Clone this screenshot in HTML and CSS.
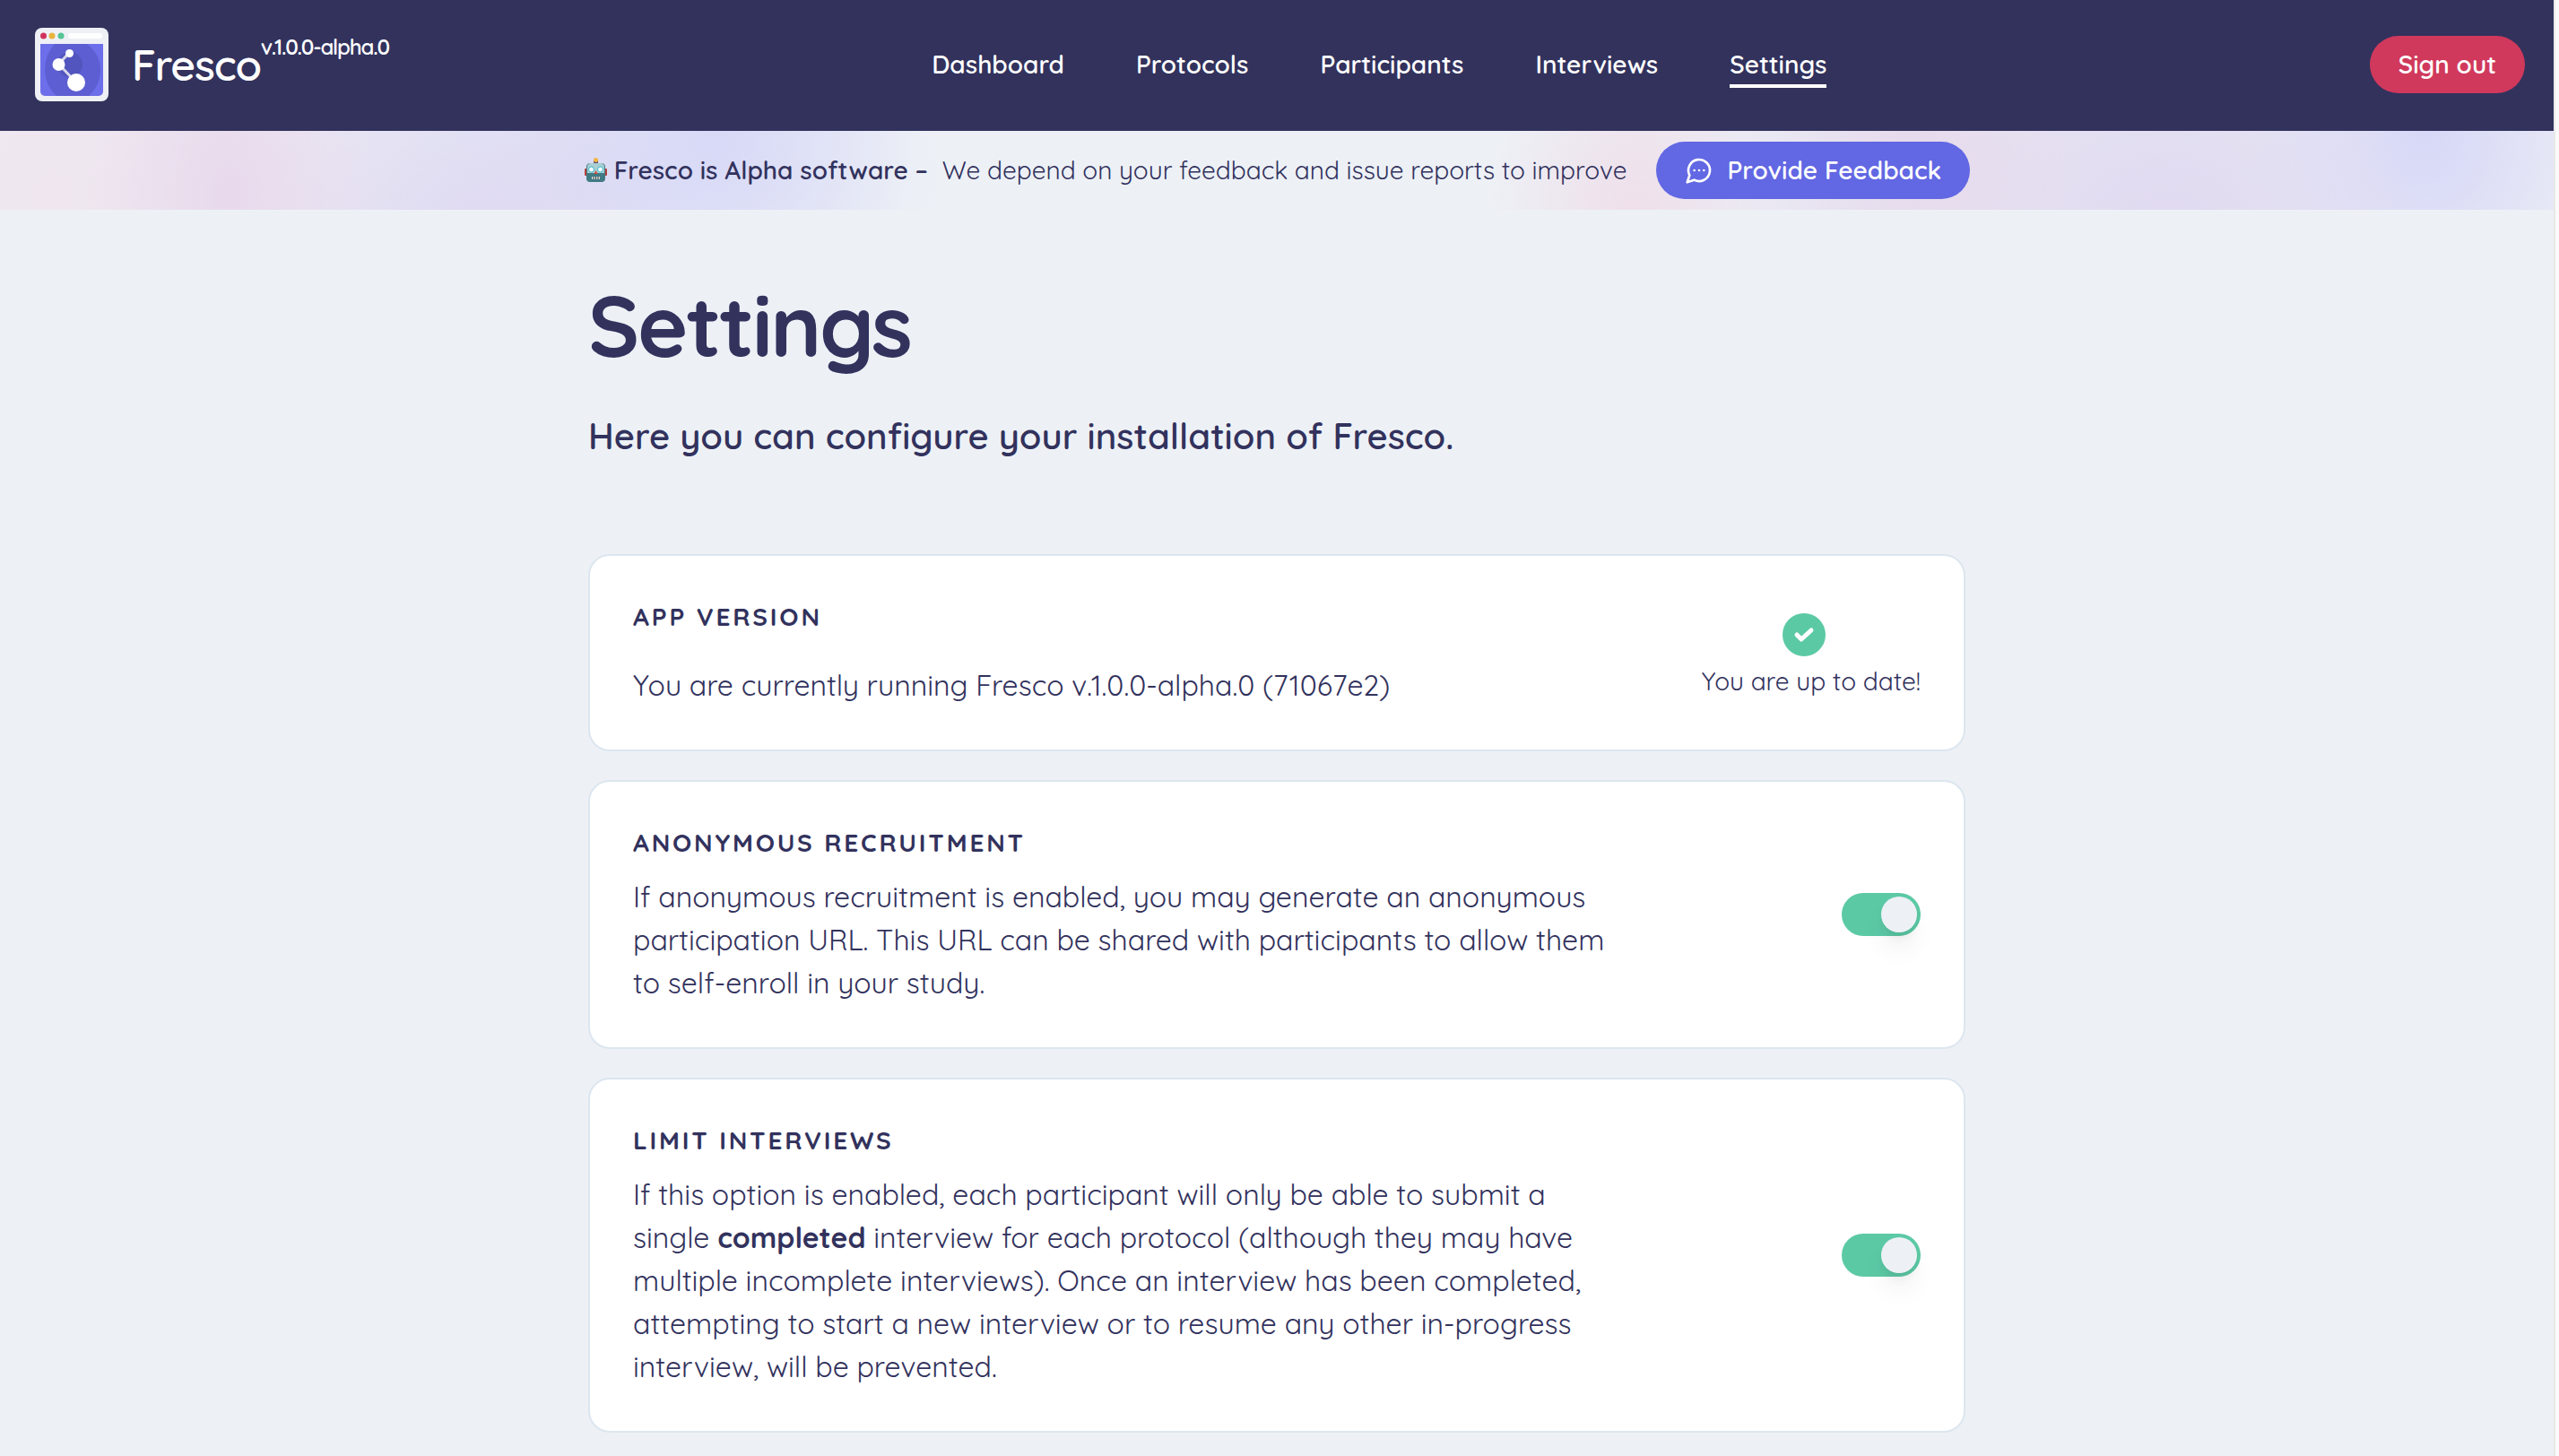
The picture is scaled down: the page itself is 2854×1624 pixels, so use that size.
FILE: index.html
```html
<!DOCTYPE html>
<html lang="en">
<head>
<meta charset="utf-8">
<meta name="viewport" content="width=device-width, initial-scale=1">
<title>Fresco – Settings</title>
<link rel="stylesheet" href="styles.css">
</head>
<body>
<header class="navbar">
  <a class="brand" href="#">
    <svg class="brand-logo" viewBox="0 0 82 82" aria-hidden="true">
      <rect width="82" height="82" rx="8" fill="#eef0f6"/>
      <circle cx="9.500" cy="9" r="3.500" fill="#d1325c"/>
      <circle cx="19" cy="9" r="3.500" fill="#e9b53c"/>
      <circle cx="29" cy="9" r="3.500" fill="#53c595"/>
      <rect x="37" y="6" width="38" height="6" rx="3" fill="#fff"/>
      <path d="M6 18h70v53a5 5 0 0 1-5 5H11a5 5 0 0 1-5-5z" fill="#6c6fe9"/>
      <path d="M22 18h36q15 12 15 29 0 17-13 29H24Q11 64 11 47q0-17 11-29z" fill="#5d5ed2"/>
      <circle cx="39" cy="41" r="14" fill="#5355be"/>
      <path d="M38 28 26.500 40.500 46 61" fill="none" stroke="#d6d7ea" stroke-width="3"/>
      <circle cx="38.500" cy="28.500" r="4.500" fill="#fff"/>
      <circle cx="26.500" cy="41" r="7" fill="#fff"/>
      <circle cx="46" cy="61" r="10" fill="#fff"/>
    </svg>
    <span class="brand-text"><span>Fresco</span><span class="brand-version">v.1.0.0-alpha.0</span></span>
  </a>
  <nav class="nav-links" aria-label="Main">
    <a href="#">Dashboard</a>
    <a href="#">Protocols</a>
    <a href="#">Participants</a>
    <a href="#">Interviews</a>
    <a class="active" href="#" aria-current="page">Settings</a>
  </nav>
  <button class="button button-danger" type="button">Sign out</button>
</header>

<aside class="banner">
  <p class="banner-text">
    <svg class="robot" viewBox="0 0 26 28" aria-hidden="true">
      <rect x="11" y="3" width="5" height="4" fill="#5a4c73"/>
      <circle cx="13.500" cy="2.500" r="2.500" fill="#f2b63d"/>
      <rect x="1" y="12" width="4" height="8" rx="1" fill="#b3423c"/>
      <rect x="22" y="12" width="4" height="8" rx="1" fill="#b3423c"/>
      <path d="M6 6h15q3 1 3 4v13q0 4-4 4H7q-4 0-4-4V10q0-3 3-4z" fill="#407a83"/>
      <path d="M7 6h13q3 1 3 4v7H4v-7q0-3 3-4z" fill="#a9cfd1"/>
      <circle cx="8.500" cy="13" r="3" fill="#f4ffff" stroke="#3fb5d1"/>
      <circle cx="18.500" cy="13" r="3" fill="#f4ffff" stroke="#3fb5d1"/>
      <path d="m13.500 14 2 4h-4z" fill="#cf4740"/>
      <path d="M9 21h9v3H9z" fill="#d5dcd6"/>
      <path d="M11 21v3M13.500 21v3M16 21v3" stroke="#35444e"/>
    </svg>
    <strong>Fresco is Alpha software –</strong>
    <span>We depend on your feedback and issue reports to improve</span>
  </p>
  <button class="button button-primary" type="button">
    <svg class="button-icon" viewBox="0 0 24 24" fill="none" stroke="currentColor" stroke-width="2" stroke-linecap="round" stroke-linejoin="round" aria-hidden="true">
      <path d="M7.900 20A9 9 0 1 0 4 16.100L2 22Z"/>
      <path d="M8 12h.01M12 12h.01M16 12h.01"/>
    </svg>
    Provide Feedback
  </button>
</aside>

<main class="content">
  <h1 class="page-title">Settings</h1>
  <p class="page-lead">Here you can configure your installation of Fresco.</p>

  <div class="cards">
    <section class="card">
      <div class="card-body card-body-spaced">
        <h2>App version</h2>
        <p>You are currently running Fresco v.1.0.0-alpha.0 (71067e2)</p>
      </div>
      <div class="status">
        <svg class="status-icon" viewBox="0 0 48 48" aria-hidden="true">
          <circle cx="24" cy="24" r="24" fill="#5cc9a5"/>
          <path d="m16 24 5 5 11-10" fill="none" stroke="#fff" stroke-width="5" stroke-linecap="round" stroke-linejoin="round"/>
        </svg>
        <span>You are up to date!</span>
      </div>
    </section>

    <section class="card">
      <div class="card-body">
        <h2><label for="recruitment">Anonymous recruitment</label></h2>
        <p>If anonymous recruitment is enabled, you may generate an anonymous participation URL. This URL can be shared with participants to allow them to self-enroll in your study.</p>
      </div>
      <input class="switch" id="recruitment" type="checkbox" role="switch" checked>
    </section>

    <section class="card">
      <div class="card-body">
        <h2><label for="limit">Limit interviews</label></h2>
        <p>If this option is enabled, each participant will only be able to submit a single <strong>completed</strong> interview for each protocol (although they may have multiple incomplete interviews). Once an interview has been completed, attempting to start a new interview or to resume any other in-progress interview, will be prevented.</p>
      </div>
      <input class="switch" id="limit" type="checkbox" role="switch" checked>
    </section>
  </div>
</main>
</body>
</html>
```
FILE: styles.css
```css
:root {
  --navy: #32325d;
  --page: #edf1f6;
  --green: #5cc9a5;
}

* {
  box-sizing: border-box;
}

html {
  background: #fafafa;
}

body {
  margin: 0 4px 0 0;
  min-height: 100vh;
  border-right: 2px solid #e8e8e8;
  background: var(--page);
  color: var(--navy);
  font-family: Quicksand, Lato, sans-serif;
  font-size: 32px;
  line-height: 48px;
}

h1, h2, p {
  margin: 0;
}

a {
  color: inherit;
  text-decoration: none;
}

.navbar {
  display: flex;
  align-items: center;
  justify-content: space-between;
  padding: 31px 32px 33px 39px;
  background: var(--navy);
  color: #fff;
}

.brand {
  display: flex;
  align-items: center;
  gap: 26px;
  font-weight: 600;
}

.brand-logo {
  width: 82px;
  height: 82px;
}

.brand-text {
  display: flex;
  align-items: flex-start;
  font-size: 48px;
  line-height: 64px;
  letter-spacing: -0.025em;
}

.brand-version {
  font-size: 24px;
  line-height: 24px;
}

.nav-links {
  display: flex;
  gap: 80px;
  font-size: 28px;
  line-height: 40px;
  font-weight: 600;
}

.nav-links a {
  padding-top: 6px;
  padding-bottom: 2px;
  border-bottom: 4px solid transparent;
}

.nav-links .active {
  border-color: #fff;
}

.button {
  display: inline-flex;
  align-items: center;
  gap: 16px;
  height: 64px;
  padding: 0 32px;
  border: 0;
  border-radius: 32px;
  color: #fff;
  font: inherit;
  font-size: 28px;
  font-weight: 600;
}

.button-danger {
  background: #d0395c;
}

.button-primary {
  background: #6267e3;
}

.button-icon {
  width: 32px;
  height: 32px;
}

.banner {
  display: flex;
  align-items: center;
  justify-content: center;
  gap: 32px;
  padding: 12px 32px;
  font-size: 28px;
  background:
    radial-gradient(8% 260% at 28% 10%, #d8d9f7, rgb(216 217 247 / 0%)),
    radial-gradient(6% 320% at 9% 80%, #e8d9ec, rgb(232 217 236 / 0%)),
    radial-gradient(10% 260% at 19% 130%, #dfd9f1, rgb(223 217 241 / 0%)),
    radial-gradient(16% 600% at 2% 80%, #efe6ef, rgb(239 230 239 / 0%)),
    radial-gradient(14% 600% at 23% 50%, #e0e1f5, rgb(224 225 245 / 0%)),
    radial-gradient(6% 260% at 64% 110%, #efdfea, rgb(239 223 234 / 0%)),
    radial-gradient(7% 260% at 75% 40%, #e6d9eb, rgb(230 217 235 / 0%)),
    radial-gradient(10% 260% at 85% 130%, #e0d9f0, rgb(224 217 240 / 0%)),
    radial-gradient(7% 280% at 95% 0, #d7d8f7, rgb(215 216 247 / 0%)),
    radial-gradient(24% 600% at 84% 50%, #e5e3f3, rgb(229 227 243 / 0%)),
    var(--page);
}

.banner-text {
  display: flex;
  align-items: center;
}

.banner-text strong {
  margin: 0 16px 0 8px;
  font-weight: 600;
}

.robot {
  width: 26px;
  height: 28px;
}

.content {
  max-width: 1536px;
  margin: 0 auto;
  padding: 76px 0 24px;
}

.page-title {
  font-size: 96px;
  line-height: 104px;
  letter-spacing: -0.025em;
}

.page-lead {
  margin-top: 44px;
  font-size: 40px;
  line-height: 56px;
  font-weight: 600;
}

.cards {
  display: grid;
  gap: 32px;
  margin-top: 104px;
}

.card {
  display: flex;
  align-items: center;
  justify-content: space-between;
  gap: 64px;
  padding: 48px;
  border: 2px solid #dce6ef;
  border-radius: 24px;
  background: #fff;
}

.card-body {
  display: grid;
  gap: 16px;
  max-width: 1104px;
}

.card-body-spaced {
  gap: 32px;
}

.card h2 {
  font-size: 28px;
  line-height: 40px;
  letter-spacing: 0.1em;
  text-transform: uppercase;
}

.status {
  display: flex;
  flex-direction: column;
  align-items: center;
  gap: 8px;
  padding-top: 8px;
  font-size: 28px;
  line-height: 40px;
}

.status-icon {
  width: 48px;
  height: 48px;
  margin-right: 16px;
}

.switch {
  appearance: none;
  flex: none;
  width: 88px;
  height: 48px;
  margin: 0;
  padding: 4px;
  border-radius: 24px;
  background: #cbd2e0;
}

.switch::before {
  content: "";
  display: block;
  width: 40px;
  height: 40px;
  border-radius: 50%;
  background: var(--page);
  box-shadow: 0 20px 30px -6px rgb(0 0 0 / 10%), 0 8px 12px -4px rgb(0 0 0 / 8%);
}

.switch:checked {
  background: var(--green);
}

.switch:checked::before {
  margin-left: auto;
}
```
